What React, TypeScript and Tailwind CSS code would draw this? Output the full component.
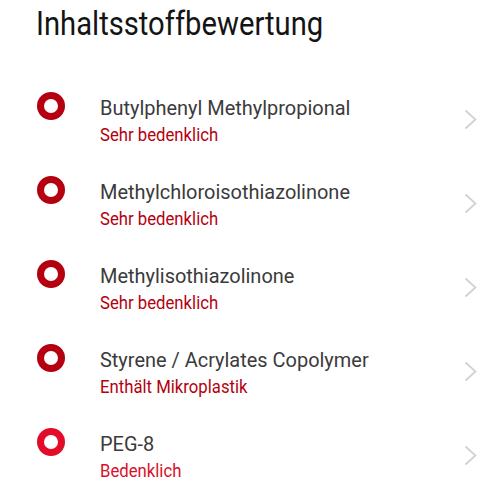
const items = [
  { name: "Butylphenyl Methylpropional", rating: "Sehr bedenklich", severe: true },
  { name: "Methylchloroisothiazolinone", rating: "Sehr bedenklich", severe: true },
  { name: "Methylisothiazolinone", rating: "Sehr bedenklich", severe: true },
  { name: "Styrene / Acrylates Copolymer", rating: "Enthält Mikroplastik", severe: true },
  { name: "PEG-8", rating: "Bedenklich", severe: false },
];

function Chevron() {
  return (
    <svg width="13" height="21" viewBox="0 0 13 21" fill="none" className="shrink-0">
      <polyline points="1.5,1.5 11.5,10.5 1.5,19.5" stroke="#d2d2d2" strokeWidth="1.8" />
    </svg>
  );
}

export default function App() {
  return (
    <div className="w-[480px] h-[480px] overflow-hidden bg-white font-['Roboto',sans-serif]">
      <h1 className="ml-[36px] mt-[4px] text-[33px] leading-[40px] text-[#141414] origin-left scale-x-[0.885] whitespace-nowrap">
        Inhaltsstoffbewertung
      </h1>
      <ul className="mt-[42px]">
        {items.map((item) => (
          <li key={item.name} className="flex h-[84px]">
            <div className="w-[100px] pl-[37px] pt-[6px] shrink-0">
              <div
                className={`w-[28px] h-[28px] rounded-full border-[7px] ${
                  item.severe ? "border-[#b4000f]" : "border-[#e30b2a]"
                }`}
              />
            </div>
            <div className="flex-1 pt-[11px]">
              <p className="text-[21px] leading-[22px] text-[#3b3b3b] origin-left scale-x-[0.95] whitespace-nowrap">
                {item.name}
              </p>
              <p
                className={`mt-[6px] text-[19px] leading-[19px] origin-left scale-x-[0.88] whitespace-nowrap ${
                  item.severe ? "text-[#b4000f]" : "text-[#d8102a]"
                }`}
              >
                {item.rating}
              </p>
            </div>
            <div className="pt-[23px] pr-[3px]">
              <Chevron />
            </div>
          </li>
        ))}
      </ul>
    </div>
  );
}
